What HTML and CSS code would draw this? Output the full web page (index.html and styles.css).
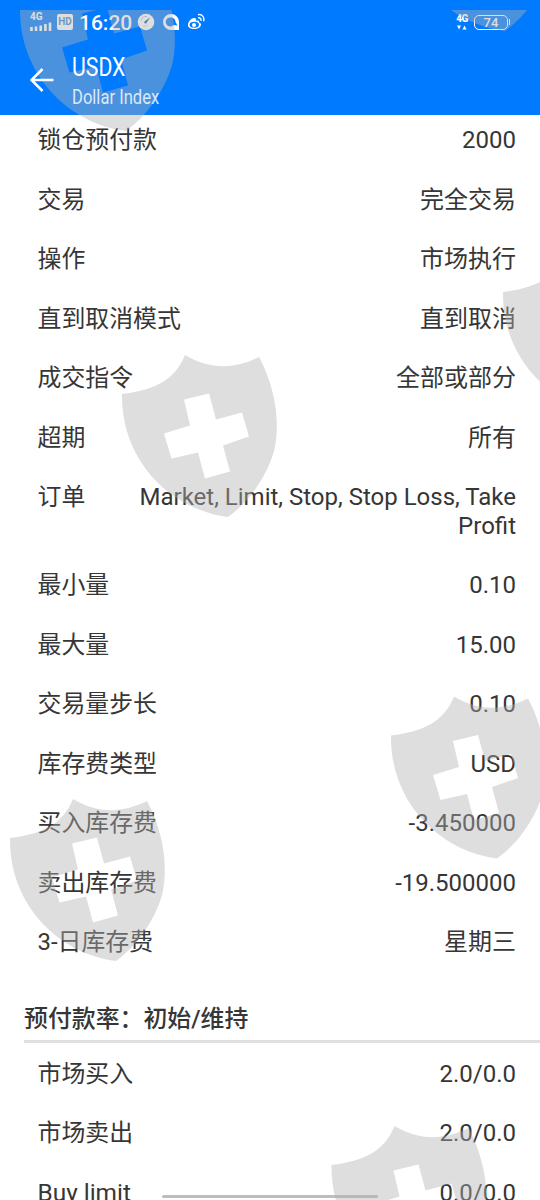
FILE: index.html
```html
<!DOCTYPE html>
<html lang="zh-CN">
<head>
<meta charset="utf-8">
<title>USDX</title>
<link rel="stylesheet" href="styles.css">
</head>
<body>
<div class="screen">
  <header class="header">
    <div class="status">
      <div class="status-left">
        <div class="signal"><span class="net">4G</span><svg width="22" height="9" viewBox="0 0 22 9"><path d="M1.500 5v4M6 4.500V9M10.700 3.500V9M15.400 2V9M20 0.500V9" stroke="#fff" stroke-width="2.600"/></svg></div>
        <span class="hd">HD</span>
        <span class="time">16:20</span>
        <svg class="ic-gauge" width="18" height="18" viewBox="0 0 18 18"><circle cx="9" cy="9" r="8.300" fill="#fff"/><path d="M4 7.500A5.500 5.500 0 0 1 10 3.500" fill="none" stroke="#9fc4ea" stroke-width="1"/><path d="M7.500 8.500l5.500-4-3.500 5.500a1.200 1.200 0 0 1-2-1.500z" fill="#1a5fae"/><path d="M6 13h5" stroke="#c5daf0"/></svg>
        <svg class="ic-chat" width="18" height="18" viewBox="0 0 18 18"><path fill-rule="evenodd" d="M9 1a8 8 0 1 0 0 16h8V9a8 8 0 0 0-8-8zM9 4.500a4.500 4.500 0 0 1 4.500 4.500l2 3.500-4-.5a4.500 4.500 0 1 1-2.500-7.500z" fill="#fff"/></svg>
        <svg class="ic-weibo" width="18" height="18" viewBox="0 0 18 18"><path d="M7 5C4 5 1 9 1 12c0 2.700 3 4 6 4 4 0 7-2 7-4.500 0-1.200-1-1.900-2-2.100.6-1.600-.6-2.500-3-1.400C9.500 6 9 5 7 5z" fill="#fff"/><ellipse cx="7.300" cy="11.800" rx="4.700" ry="3" fill="#087bf8"/><circle cx="7" cy="12" r="2" fill="#fff"/><path d="M11 4.800c2-.4 3.500 1 3 3M11 1.700c4-.8 6.800 2.500 5.600 6.500" fill="none" stroke="#fff" stroke-width="1.400"/></svg>
      </div>
      <div class="status-right">
        <div class="data"><span class="net2">4G</span><svg width="10" height="5" viewBox="0 0 10 5"><path d="M0 .5h4L2 4.500zM5.500 4.500h4l-2-4z" fill="#fff"/></svg></div>
        <div class="battery">74</div><i class="battery-tip"></i>
      </div>
    </div>
    <div class="toolbar">
      <svg class="back" width="24" height="24" viewBox="0 0 24 24"><path d="M23.500 12H1.500M12.500 1L1.500 12l11 11" fill="none" stroke="#fff" stroke-width="2.600"/></svg>
      <div class="titles"><div class="title">USDX</div><div class="subtitle">Dollar Index</div></div>
    </div>
  </header>
  <main class="list">
    <div class="row"><span>锁仓预付款</span><span class="value">2000</span></div>
    <div class="row"><span>交易</span><span class="value">完全交易</span></div>
    <div class="row"><span>操作</span><span class="value">市场执行</span></div>
    <div class="row"><span>直到取消模式</span><span class="value">直到取消</span></div>
    <div class="row"><span>成交指令</span><span class="value">全部或部分</span></div>
    <div class="row"><span>超期</span><span class="value">所有</span></div>
    <div class="row"><span>订单</span><span class="value">Market, Limit, Stop, Stop Loss, Take<br>Profit</span></div>
    <div class="row"><span>最小量</span><span class="value">0.10</span></div>
    <div class="row"><span>最大量</span><span class="value">15.00</span></div>
    <div class="row"><span>交易量步长</span><span class="value">0.10</span></div>
    <div class="row"><span>库存费类型</span><span class="value">USD</span></div>
    <div class="row"><span>买入库存费</span><span class="value">-3.450000</span></div>
    <div class="row"><span>卖出库存费</span><span class="value">-19.500000</span></div>
    <div class="row"><span>3-日库存费</span><span class="value">星期三</span></div>
    <h2 class="section">预付款率：初始/维持</h2>
    <div class="row"><span>市场买入</span><span class="value">2.0/0.0</span></div>
    <div class="row"><span>市场卖出</span><span class="value">2.0/0.0</span></div>
    <div class="row"><span class="latin">Buy limit</span><span class="value">0.0/0.0</span></div>
  </main>
  <div class="home-bar"></div>
  <svg class="marks" width="540" height="1200" viewBox="0 0 540 1200">
    <defs>
      <clipPath id="top"><rect y="10" width="540" height="1190"/></clipPath>
      <path id="shield" fill-rule="evenodd" d="M12 54C45 50 65 40 75 15C98 29 123 30 149 17C165 47 170 80 165 107C160 130 142 160 118 177C62 170 11 122 12 54ZM74 59.500L80 85.500L54 93.500L61.500 118.500L88 112.500L95 138.500L120 131.500L113 105.500L139 96.500L132 72.500L106 79.500L99 53.500Z"/>
    </defs>
    <g fill="#b0b0b0" fill-opacity=".42" clip-path="url(#top)">
      <use href="#shield" x="8" y="-46"/>
      <use href="#shield" x="387" y="-146"/>
      <use href="#shield" x="491" y="238"/>
      <use href="#shield" x="110" y="340"/>
      <use href="#shield" x="379" y="681.500"/>
      <use href="#shield" x="-2" y="784"/>
      <use href="#shield" x="319.500" y="1111"/>
    </g>
  </svg>
</div>
</body>
</html>
```
FILE: styles.css
```css
* { box-sizing: border-box; }
body { margin: 0; background: #fff; }
.screen {
  position: relative;
  width: 540px;
  height: 1200px;
  overflow: hidden;
  font-family: Roboto, "Noto Sans CJK SC", sans-serif;
  color: #363636;
}
.header { height: 115px; background: #007aff; color: #fff; }
.status { display: flex; justify-content: space-between; height: 44px; padding: 0 30px 0 30px; }
.status-left, .status-right { display: flex; align-items: center; }
.signal { display: flex; flex-direction: column; width: 22px; height: 19px; margin-top: -1px; }
.net { font-size: 10px; line-height: 10px; font-weight: 700; }
.hd {
  width: 16px; height: 16px; margin-left: 5px;
  background: #fff; border-radius: 2px; color: #3f86d4;
  font-size: 10px; line-height: 16px; font-weight: 700; text-align: center;
}
.time { width: 52px; margin-left: 6px; font: 500 21px/24px Roboto, sans-serif; white-space: nowrap; margin-top: 1px; }
.ic-gauge { margin-left: 6px; }
.ic-chat { margin-left: 7px; }
.ic-weibo { margin-left: 7px; margin-top: -1px; }
.data { display: flex; flex-direction: column; align-items: center; width: 12px; margin-right: 6px; }
.net2 { font-size: 10px; line-height: 10px; font-weight: 900; letter-spacing: -.5px; }
.data svg { margin-top: 1px; }
.battery {
  width: 34px; height: 15px; border: 1.500px solid #fff; border-radius: 5px;
  font-size: 13px; line-height: 13px; font-weight: 500; text-align: center;
}
.battery-tip { width: 1.500px; height: 6px; background: #fff; margin-left: .5px; }
.toolbar { position: relative; z-index: 1; display: flex; padding-left: 30px; }
.back { margin-top: 24px; }
.titles { margin-left: 18px; padding-top: 9px; }
.title { font-size: 25px; line-height: 30px; transform: scaleX(.85); transform-origin: left; }
.subtitle { margin-top: 3px; font-size: 19.500px; line-height: 24px; transform: scaleX(.85); transform-origin: left; white-space: nowrap; opacity: .8; }
.list { padding-top: 11px; }
.row {
  display: flex; justify-content: space-between;
  padding: 0 24px 31px 37.500px;
  font-size: 23.900px; line-height: 28.500px;
}
.value { text-align: right; white-space: nowrap; font-size: 24px; }
.latin { font-size: 24.400px; }
.section {
  height: 38px; margin: 17px 0 17px 24px;
  border-bottom: 3px solid #e0e0e0;
  font-size: 23.900px; line-height: 28.500px; font-weight: 500;
}
.home-bar { position: absolute; left: 162px; top: 1195px; width: 216px; height: 3px; border-radius: 2px; background: #bdbdbd; }
.marks { position: absolute; left: 0; top: 0; pointer-events: none; }
```
